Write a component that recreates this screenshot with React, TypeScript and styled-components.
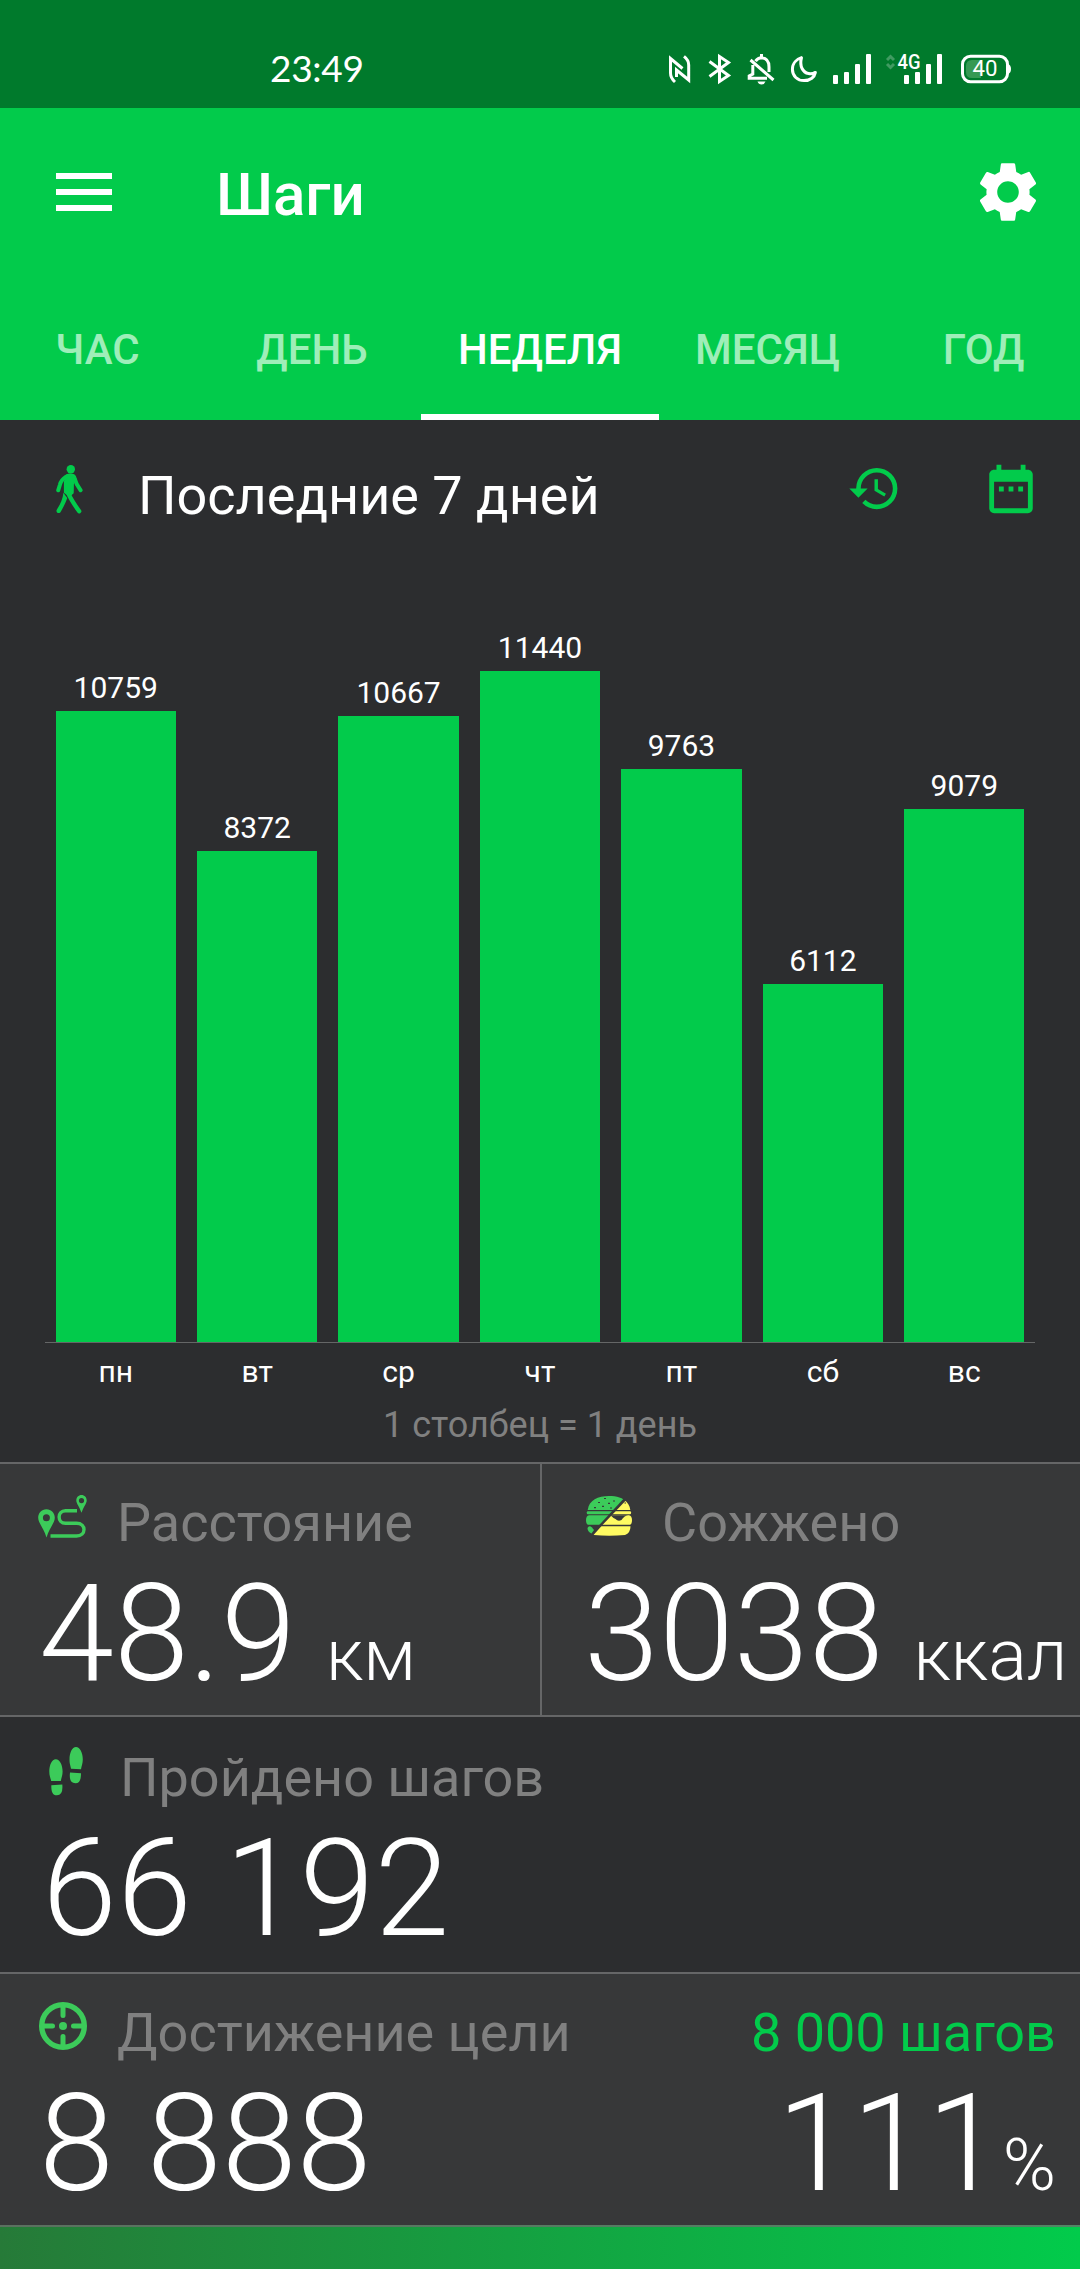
import React from 'react';
import styled, { createGlobalStyle } from 'styled-components';
import { MdSettings, MdHistory, MdDateRange } from 'react-icons/md';

const c = {
  status: '#007a2c',
  green: '#02cb4b',
  icon: '#3ccb5a',
  dark: '#2c2d2f',
  panel: '#373839',
  line: '#656667',
  muted: '#808080',
};

const Global = createGlobalStyle`
  * { box-sizing: border-box; }
  body { margin: 0; background: ${c.dark}; }
`;

const Screen = styled.main`
  width: 1080px;
  height: 2269px;
  overflow: hidden;
  display: flex;
  flex-direction: column;
  background: ${c.dark};
  color: #fff;
  font-family: Roboto, 'Noto Sans', sans-serif;
  white-space: nowrap;
`;

const StatusBar = styled.div`
  height: 108px;
  flex: none;
  display: flex;
  align-items: flex-start;
  padding: 54px 0 0 270px;
  background: ${c.status};
`;

const Clock = styled.time`
  width: 399px;
  margin-top: -9px;
  font: 400 37px/46px Lato, sans-serif;
  letter-spacing: -0.3px;
`;

const StatusIcon = styled.svg<{ $gap?: number }>`
  flex: none;
  margin-left: ${(p) => p.$gap ?? 0}px;
  overflow: visible;
  fill: none;
  stroke: #fff;
  stroke-width: 3;
`;

const AppHeader = styled.header`
  height: 312px;
  flex: none;
  background: ${c.green};
`;

const Toolbar = styled.div`
  height: 168px;
  display: flex;
  align-items: center;
  padding: 0 36px 0 56px;
`;

const MenuButton = styled.button`
  width: 56px;
  height: 38px;
  padding: 0;
  border: 0;
  background: none;
  display: flex;
  flex-direction: column;
  justify-content: space-between;
`;

const MenuLine = styled.span`
  width: 56px;
  height: 6px;
  background: #fff;
`;

const Title = styled.h1`
  margin: 5px auto 0 104px;
  font-size: 60px;
  line-height: 70px;
  font-weight: 500;
`;

const Tabs = styled.nav`
  height: 144px;
  display: flex;
`;

const Tab = styled.div<{ $width: number; $active?: boolean; $before?: number; $after?: number }>`
  width: ${(p) => p.$width}px;
  flex: none;
  padding: 49px ${(p) => p.$after ?? 0}px 0 ${(p) => p.$before ?? 0}px;
  text-align: center;
  font-size: 42px;
  line-height: 50px;
  font-weight: 500;
  color: ${(p) => (p.$active ? '#fff' : '#9eeeb9')};
  border-bottom: 6px solid ${(p) => (p.$active ? '#fff' : 'transparent')};
`;

const ChartPanel = styled.section`
  height: 1042px;
  flex: none;
`;

const ChartHeader = styled.div`
  height: 164px;
  display: flex;
  align-items: flex-start;
  padding: 40px 40px 0 56px;
  color: ${c.green};
`;

const ChartTitle = styled.h2`
  margin: 4px auto 0 55px;
  font-size: 54px;
  line-height: 64px;
  font-weight: 400;
  color: #fff;
`;

const IconSlot = styled.span<{ $top: number; $right?: number }>`
  display: flex;
  margin: ${(p) => p.$top}px ${(p) => p.$right ?? 0}px 0 0;
`;

const Plot = styled.div`
  height: 759px;
  margin: 0 45px;
  display: grid;
  grid-template-columns: repeat(7, 1fr);
  border-bottom: 1px solid ${c.line};
`;

const Column = styled.div`
  display: flex;
  flex-direction: column;
  justify-content: flex-end;
  align-items: center;
`;

const Value = styled.span`
  font-size: 30px;
  line-height: 36px;
  margin-bottom: 5px;
`;

const Bar = styled.div`
  width: 85%;
  background: ${c.green};
`;

const Days = styled.div`
  margin: 11px 45px 0;
  display: grid;
  grid-template-columns: repeat(7, 1fr);
  text-align: center;
  font-size: 30px;
  line-height: 36px;
`;

const Caption = styled.p`
  margin: 14px 0 0;
  text-align: center;
  font-size: 36px;
  line-height: 42px;
  color: ${c.muted};
`;

const StatRow = styled.section<{ $plain?: boolean }>`
  display: flex;
  flex: none;
  height: ${(p) => (p.$plain ? 257 : 253)}px;
  border-top: 2px solid ${c.line};
  background: ${(p) => (p.$plain ? c.dark : c.panel)};
`;

const Cell = styled.div<{ $width: number; $left: number; $top?: number; $divided?: boolean }>`
  width: ${(p) => p.$width}px;
  flex: none;
  padding: ${(p) => p.$top ?? 27}px 0 0 ${(p) => p.$left}px;
  border-left: ${(p) => (p.$divided ? `2px solid ${c.line}` : '0')};
`;

const EndCell = styled.div`
  flex: 1;
  padding: 27px 24px 0 0;
  display: flex;
  flex-direction: column;
  align-items: flex-end;
`;

const Label = styled.div<{ $accent?: boolean }>`
  height: 64px;
  display: flex;
  align-items: flex-start;
  font-size: 54px;
  line-height: 64px;
  color: ${(p) => (p.$accent ? c.green : c.muted)};
`;

const LabelIcon = styled.svg<{ $top: number; $gap: number; $left?: number }>`
  flex: none;
  margin: ${(p) => p.$top}px ${(p) => p.$gap}px 0 ${(p) => p.$left ?? 0}px;
  overflow: visible;
`;

const Amount = styled.div<{ $indent?: number }>`
  display: flex;
  align-items: baseline;
  padding-left: ${(p) => p.$indent ?? 0}px;
  font-size: 135px;
  line-height: 158px;
  font-weight: 300;
`;

const Unit = styled.span<{ $gap: number }>`
  margin-left: ${(p) => p.$gap}px;
  font-size: 72px;
  line-height: 84px;
`;

const Progress = styled.div`
  flex: 1;
  border-top: 2px solid rgba(110, 110, 110, 0.75);
  background: linear-gradient(90deg, #267a38, ${c.green}) border-box;
`;

const week = [
  { day: 'пн', steps: 10759 },
  { day: 'вт', steps: 8372 },
  { day: 'ср', steps: 10667 },
  { day: 'чт', steps: 11440 },
  { day: 'пт', steps: 9763 },
  { day: 'сб', steps: 6112 },
  { day: 'вс', steps: 9079 },
];
const MAX_STEPS = 11440;
const MAX_BAR = 671;

const SignalBars = ({ x = 0 }: { x?: number }) => (
  <g fill="#fff" stroke="none">
    <rect x={x} y="21" width="5" height="9" rx="1" />
    <rect x={x + 11} y="18" width="5" height="12" rx="1" />
    <rect x={x + 22} y="10" width="5" height="20" rx="1" />
    <rect x={x + 33} y="0" width="5" height="30" rx="1" />
  </g>
);

const StatusIcons = () => (
  <>
    <StatusIcon width="22" height="30" viewBox="0 0 22 30">
      <path d="M6 28Q1.5 24 1.5 19V4.5L13.5 14.5M15 2.4Q19.7 6 19.7 11V26L7.5 16V23" />
    </StatusIcon>
    <StatusIcon $gap={17} width="24" height="30" viewBox="0 0 24 30">
      <path d="M1.5 7.5 20.5 21.5 11.5 27.5V2.5L20.5 8.5 1.5 22.5" />
    </StatusIcon>
    <StatusIcon $gap={15} width="28" height="30" viewBox="0 0 28 30">
      <path d="M8.5 7.2Q11 3.8 14.5 3.8 22 4.5 22 13V18M5.8 11V20L2.2 22V24.2H20M3.5 6 26.5 26M14.5 0V4" />
      <path d="M10.5 27.5H18.5Q17.5 30.4 14.5 30.4 11.5 30.4 10.5 27.5Z" fill="#fff" stroke="none" />
    </StatusIcon>
    <StatusIcon $gap={15} width="28" height="30" viewBox="0 0 28 30">
      <path d="M11.5 3.6C7 5 2.4 9 2.4 15.3 2.4 22 7.5 26.6 14 26.6 20.5 26.6 24.5 23 25.4 18.4 23 19.8 20.7 20 18.5 19.6 13 18.5 9.2 12.5 11.5 3.6Z" strokeLinejoin="round" />
    </StatusIcon>
    <StatusIcon $gap={15} width="38" height="30" viewBox="0 0 38 30">
      <SignalBars />
    </StatusIcon>
    <StatusIcon $gap={15} width="57" height="30" viewBox="0 0 57 30">
      <path d="M1 6 4.5 2.5 8 6M1 10 4.5 13.5 8 10" opacity="0.25" />
      <text x="11.5" y="15" fill="#fff" stroke="none" fontFamily="Roboto, sans-serif" fontSize="20" fontWeight="500" textLength="23" lengthAdjust="spacingAndGlyphs">4G</text>
      <SignalBars x={18} />
    </StatusIcon>
    <StatusIcon $gap={18} width="51" height="30" viewBox="0 0 51 30">
      <path d="M5 12Q5 6 11 6H20V24H11Q5 24 5 18Z" fill="#369953" stroke="none" />
      <rect x="1.5" y="2.3" width="45" height="25.4" rx="8" />
      <path d="M47 10Q50 11 50 15T47 20Z" fill="#fff" stroke="none" />
      <text x="11.5" y="22.3" fill="#fff" stroke="none" fontFamily="Roboto, sans-serif" fontSize="21.5" textLength="25" lengthAdjust="spacingAndGlyphs">40</text>
    </StatusIcon>
  </>
);

const WalkIcon = () => (
  <svg width="27" height="49" viewBox="0 0 27 49" fill="currentColor" stroke="currentColor">
    <circle cx="14.8" cy="4.2" r="4.2" stroke="none" />
    <path d="M10.5 10Q14 8.6 18 10L19.8 14 17.2 19 17 28 13.5 31 8.6 27.5 8.6 17Z" strokeWidth="1.4" strokeLinejoin="round" />
    <path d="M9.8 11.8Q5 15 4 19.5L2.2 25.3M18 11.8Q19.8 19 24.6 25.2" fill="none" strokeWidth="4" strokeLinecap="round" />
    <path d="M12 27.5Q15 35 23.2 46.2" fill="none" strokeWidth="4.4" strokeLinecap="round" />
    <path d="M7.4 27.8 11.2 33Q9.8 38 4.5 47.2 2.5 49 0.9 47.2 0 46.3 0.9 44.6 6.6 36 7.4 27.8Z" stroke="none" />
  </svg>
);

const RouteIcon = () => (
  <LabelIcon $top={4} $gap={30} width="49" height="43" viewBox="0 0 49 43" fill={c.icon}>
    <path fillRule="evenodd" d="M8.4 14.2C3.5 14.2.2 18 .2 22.8.2 28 5.5 32.5 8.5 42.5 11.5 32.5 16.8 28 16.8 22.8 16.8 18 13.3 14.2 8.4 14.2ZM8.4 19.2A3.5 3.5 0 1 1 8.4 26.2 3.5 3.5 0 1 1 8.4 19.2Z" />
    <path fillRule="evenodd" d="M43.5 0C40.5 0 38.3 2.4 38.3 5.4 38.3 8.5 41.5 11.5 43.5 17.8 45.5 11.5 48.7 8.5 48.7 5.4 48.7 2.4 46.5 0 43.5 0ZM43.5 3A2.6 2.6 0 1 1 43.5 8.2 2.6 2.6 0 1 1 43.5 3Z" />
    <path d="M39 15.7H27.5C19 15.7 19 28.2 27.5 28.2H38.5C48.5 28.2 48.5 41 38.5 41H12.5" fill="none" stroke={c.icon} strokeWidth="3.4" />
  </LabelIcon>
);

const BurgerIcon = () => (
  <LabelIcon $left={2} $top={5} $gap={30} width="46" height="40" viewBox="0 0 46 40">
    <clipPath id="burgerLeft"><path d="M-1-1H41L13.2 29H-1Z" /></clipPath>
    <clipPath id="burgerRight"><path d="M39.8 4.5H47V41H7L8 38.5 16 29.5Z" /></clipPath>
    {[{ side: 'burgerLeft', fill: c.icon }, { side: 'burgerRight', fill: '#fffb62' }].map(({ side, fill }) => (
      <g key={side} clipPath={`url(#${side})`} fill={fill}>
        <path d="M1.7 14C3 4 12 0 23 0S43 4 44.3 14Z" />
        <rect x="0.8" y="15.2" width="44.2" height="3" rx="1" />
        <path d="M3 19.2H43Q46 20 46 24 46 28 44 28.8H2Q0 28 0 24 0 20 3 19.2Z" />
        {side === 'burgerRight' && <path d="M1.5 30.3H44.5Q44.5 37 39 39 23 40.5 8 39 2 37 1.5 30.3Z" />}
      </g>
    ))}
    <path d="M1.5 32Q3 29 6 31.5L8 34 5.5 37.5Q1.5 35.5 1.5 32Z" fill={c.icon} />
    <path d="M24.5 19.3H42Q38 20 35.5 24 32 25.8 29.5 23 27.5 22.5 24.5 19.3Z" fill={c.panel} />
    <path d="M18 2.5h2M27 5h2M12 6.5h2M22 7.3h2M16 10.3h2M8 11.7h2M24 12h2M38.5 7h1.5" stroke={c.panel} strokeWidth="1.2" />
  </LabelIcon>
);

const FeetIcon = () => (
  <LabelIcon $left={7} $top={1} $gap={37} width="34" height="49" viewBox="0 0 34 49" fill={c.icon}>
    <path d="M6.8 12.2C2.8 12.2.3 18 .3 24.5.3 29 1.6 31 2.2 34H11.8C12.4 30.5 13.6 28.5 13.6 24.5 13.6 18 10.8 12.2 6.8 12.2ZM2.3 38.2 13.3 37.6Q14.3 48.3 8 48.3C3.5 48.3 2.3 45 2.3 38.2Z" />
    <path d="M27 0C31 0 33.8 6 33.8 12.5 33.8 16.5 32.5 19 32 22.3L22 21.7C21.5 18.5 20.5 17 20.5 12.5 20.5 6 23 0 27 0ZM21 25.4 32 26.3C32 33 30.5 36.2 26.5 36.2 21 36.2 20.3 31 21 25.4Z" />
  </LabelIcon>
);

const TargetIcon = () => (
  <LabelIcon $left={1} $top={1} $gap={30} width="48" height="48" viewBox="0 0 48 48" fill="none" stroke={c.icon}>
    <circle cx="24" cy="24" r="21.3" strokeWidth="5.4" />
    <path d="M24 4V13.5M24 34.5V44M4 24H13.5M34.5 24H44" strokeWidth="5" strokeLinecap="round" />
    <circle cx="24" cy="24" r="4" fill={c.icon} stroke="none" />
  </LabelIcon>
);

export default function App() {
  return (
    <>
      <Global />
      <Screen>
        <StatusBar>
          <Clock>23:49</Clock>
          <StatusIcons />
        </StatusBar>
        <AppHeader>
          <Toolbar>
            <MenuButton aria-label="Меню"><MenuLine /><MenuLine /><MenuLine /></MenuButton>
            <Title>Шаги</Title>
            <MdSettings size={72} />
          </Toolbar>
          <Tabs>
            <Tab $width={203} $after={8}>ЧАС</Tab>
            <Tab $width={218}>ДЕНЬ</Tab>
            <Tab $width={238} $active>НЕДЕЛЯ</Tab>
            <Tab $width={219} $after={2}>МЕСЯЦ</Tab>
            <Tab $width={202} $before={9}>ГОД</Tab>
          </Tabs>
        </AppHeader>
        <ChartPanel>
          <ChartHeader>
            <IconSlot $top={5}><WalkIcon /></IconSlot>
            <ChartTitle>Последние 7 дней</ChartTitle>
            <IconSlot $top={1} $right={80}><MdHistory size={55} /></IconSlot>
            <IconSlot $top={0}><MdDateRange size={58} /></IconSlot>
          </ChartHeader>
          <Plot>
            {week.map(({ day, steps }) => (
              <Column key={day}>
                <Value>{steps}</Value>
                <Bar style={{ height: (steps / MAX_STEPS) * MAX_BAR }} />
              </Column>
            ))}
          </Plot>
          <Days>{week.map(({ day }) => <span key={day}>{day}</span>)}</Days>
          <Caption>1 столбец = 1 день</Caption>
        </ChartPanel>
        <StatRow>
          <Cell $width={540} $left={38}>
            <Label><RouteIcon />Расстояние</Label>
            <Amount $indent={1}>48.9<Unit $gap={30}>км</Unit></Amount>
          </Cell>
          <Cell $width={540} $left={42} $divided>
            <Label><BurgerIcon />Сожжено</Label>
            <Amount>3038<Unit $gap={30}>ккал</Unit></Amount>
          </Cell>
        </StatRow>
        <StatRow $plain>
          <Cell $width={1080} $left={42} $top={29}>
            <Label><FeetIcon />Пройдено шагов</Label>
            <Amount>66 192</Amount>
          </Cell>
        </StatRow>
        <StatRow>
          <Cell $width={640} $left={38}>
            <Label><TargetIcon />Достижение цели</Label>
            <Amount $indent={1}>8 888</Amount>
          </Cell>
          <EndCell>
            <Label $accent>8 000 шагов</Label>
            <Amount>111<Unit $gap={1}>%</Unit></Amount>
          </EndCell>
        </StatRow>
        <Progress />
      </Screen>
    </>
  );
}
